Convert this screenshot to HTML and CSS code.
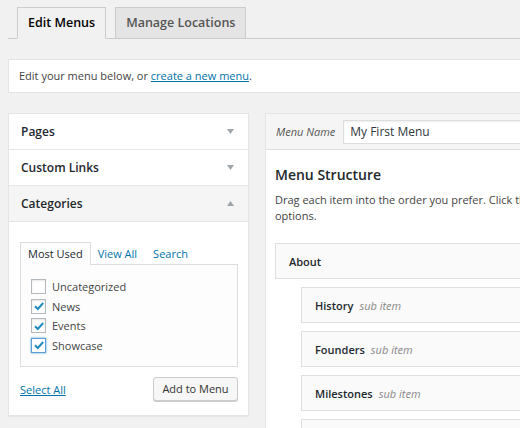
FILE: index.html
```html
<!DOCTYPE html>
<html>
<head>
<meta charset="utf-8">
<link rel="stylesheet" href="styles.css">
</head>
<body>
<div class="wrap">
  <div class="tabs">
    <div class="tab active">Edit Menus</div>
    <div class="tab">Manage Locations</div>
  </div>
  <div class="notice">Edit your menu below, or <a href="#">create a new menu</a>.</div>
  <div class="columns">
    <div class="side">
      <div class="acc-head"><span>Pages</span><svg class="arrow" width="7" height="5" viewBox="0 0 7 5"><polygon points="0,0 7,0 3.5,5" fill="#a0a5aa"/></svg></div>
      <div class="acc-head"><span>Custom Links</span><svg class="arrow" width="7" height="5" viewBox="0 0 7 5"><polygon points="0,0 7,0 3.5,5" fill="#a0a5aa"/></svg></div>
      <div class="acc-head open"><span>Categories</span><svg class="arrow" width="7" height="5" viewBox="0 0 7 5"><polygon points="0,5 7,5 3.5,0" fill="#a0a5aa"/></svg></div>
      <div class="acc-body">
        <div class="cat-tabs">
          <div class="cat-tab active">Most Used</div>
          <a class="cat-tab" href="#">View All</a>
          <a class="cat-tab" href="#">Search</a>
        </div>
        <div class="cat-box">
          <label class="check"><span class="cb"></span>Uncategorized</label>
          <label class="check"><span class="cb"><svg width="12" height="12" viewBox="0 0 12 12"><path d="M2 6.2 L4.8 9 L10.2 3" fill="none" stroke="#1e8cbe" stroke-width="2"/></svg></span>News</label>
          <label class="check"><span class="cb"><svg width="12" height="12" viewBox="0 0 12 12"><path d="M2 6.2 L4.8 9 L10.2 3" fill="none" stroke="#1e8cbe" stroke-width="2"/></svg></span>Events</label>
          <label class="check"><span class="cb focus"><svg width="12" height="12" viewBox="0 0 12 12"><path d="M2 6.2 L4.8 9 L10.2 3" fill="none" stroke="#1e8cbe" stroke-width="2"/></svg></span>Showcase</label>
        </div>
        <div class="actions">
          <a href="#">Select All</a>
          <button class="btn">Add to Menu</button>
        </div>
      </div>
    </div>
    <div class="main">
      <div class="main-head">
        <span class="label">Menu Name</span>
        <div class="input">My First Menu</div>
      </div>
      <div class="main-body">
        <h3>Menu Structure</h3>
        <p class="desc">Drag each item into the order you prefer. Click the arrow on the right of the item to reveal additional configuration<br>options.</p>
        <div class="items">
          <div class="item"><b>About</b></div>
          <div class="item sub"><b>History</b><i>sub item</i></div>
          <div class="item sub"><b>Founders</b><i>sub item</i></div>
          <div class="item sub"><b>Milestones</b><i>sub item</i></div>
          <div class="item sub"><b>Timeline</b><i>sub item</i></div>
        </div>
      </div>
    </div>
  </div>
</div>
</body>
</html>
```

FILE: styles.css
```css
html, body {
  margin: 0;
  padding: 0;
  overflow: hidden;
  background: #f1f1f1;
}
body {
  font-family: "Open Sans", "Noto Sans", sans-serif;
  font-size: 11px;
  color: #444;
  width: 520px;
  height: 428px;
}
a { color: #0073aa; }
.wrap {
  width: 900px;
  padding: 7px 0 0 8px;
}
.tabs {
  display: flex;
  gap: 9px;
  padding-left: 9px;
  border-bottom: 1px solid #ccc;
  height: 31px;
}
.tab {
  box-sizing: border-box;
  height: 32px;
  padding: 0 10px;
  line-height: 30px;
  border: 1px solid #ccc;
  background: #e4e4e4;
  font-size: 12.5px;
  font-weight: 600;
  color: #555;
}
.tab.active {
  background: #f1f1f1;
  border-bottom-color: #f1f1f1;
  color: #000;
}
.notice {
  margin-top: 20px;
  height: 32px;
  line-height: 32px;
  padding-left: 10px;
  background: #fff;
  border: 1px solid #e5e5e5;
  border-right: 0;
  color: #444;
}
.columns {
  display: flex;
  align-items: flex-start;
  gap: 16px;
  margin-top: 20px;
}
.side {
  width: 239px;
  flex: none;
  background: #fff;
  border: 1px solid #e5e5e5;
  box-shadow: 0 1px 1px rgba(0,0,0,.04);
}
.acc-head {
  display: flex;
  align-items: center;
  justify-content: space-between;
  height: 35px;
  padding: 0 14px 0 12px;
  border-bottom: 1px solid #e5e5e5;
  font-size: 12px;
  font-weight: 600;
  color: #23282d;
}
.acc-head.open { background: #f5f5f5; }
.acc-body {
  padding: 20px 10px 14px 11px;
}
.cat-tabs {
  display: flex;
  align-items: flex-end;
  height: 22px;
}
.cat-tab {
  padding: 0 7px;
  line-height: 21px;
  text-decoration: none;
  color: #0073aa;
  margin-right: 2px;
}
.cat-tab.active {
  border: 1px solid #ddd;
  border-bottom: 0;
  background: #fdfdfd;
  color: #23282d;
  line-height: 22px;
  margin-bottom: -1px;
  margin-right: 0;
  position: relative;
}
.cat-box {
  border: 1px solid #ddd;
  background: #fdfdfd;
  padding: 12px 10px 10px 10px;
  height: 79px;
}
.check {
  display: flex;
  align-items: center;
  height: 19.5px;
  color: #444;
}
.cb {
  box-sizing: border-box;
  width: 15px;
  height: 15px;
  border: 1px solid #b4b9be;
  background: #fff;
  box-shadow: inset 0 1px 2px rgba(0,0,0,.1);
  margin-right: 6px;
  display: flex;
  align-items: center;
  justify-content: center;
}
.cb.focus { border-color: #5b9dd9; box-shadow: 0 0 2px rgba(30,140,190,.8); }
.actions {
  display: flex;
  justify-content: space-between;
  align-items: center;
  margin-top: 10px;
}
.btn {
  font-family: inherit;
  font-size: 11px;
  color: #333;
  height: 24px;
  width: 85px;
  padding: 0;
  border: 1px solid #ccc;
  border-radius: 3px;
  background: #f7f7f7;
  box-shadow: 0 1px 0 #ccc;
  line-height: 22px;
}
.main {
  flex: 1;
  background: #fff;
  border: 1px solid #e5e5e5;
  border-right: 0;
  height: 340px;
}
.main-head {
  display: flex;
  align-items: center;
  height: 35px;
  padding-left: 10px;
  background: #f5f5f5;
  border-bottom: 1px solid #dfdfdf;
}
.label {
  font-style: italic;
  color: #555;
  margin-right: 8px;
}
.input {
  flex: 1;
  height: 22px;
  line-height: 22px;
  padding-left: 6px;
  border: 1px solid #ddd;
  border-right: 0;
  background: #fff;
  font-size: 12px;
  color: #32373c;
  box-shadow: inset 0 1px 2px rgba(0,0,0,.07);
}
.main-body {
  padding: 0 0 0 9px;
}
h3 {
  margin: 14px 0 0;
  font-size: 14px;
  font-weight: 600;
  color: #23282d;
  line-height: 22px;
}
.desc {
  margin: 6px 0 0;
  line-height: 16px;
  color: #444;
  white-space: nowrap;
}
.items {
  display: flex;
  flex-direction: column;
  gap: 8px;
  margin-top: 19px;
}
.item {
  display: flex;
  align-items: center;
  height: 34px;
  padding-left: 13px;
  background: #fafafa;
  border: 1px solid #dfdfdf;
  border-right: 0;
  color: #23282d;
}
.item b { font-weight: 600; }
.item.sub { margin-left: 26px; }
.item i {
  color: #888;
  margin-left: 6px;
}
```
